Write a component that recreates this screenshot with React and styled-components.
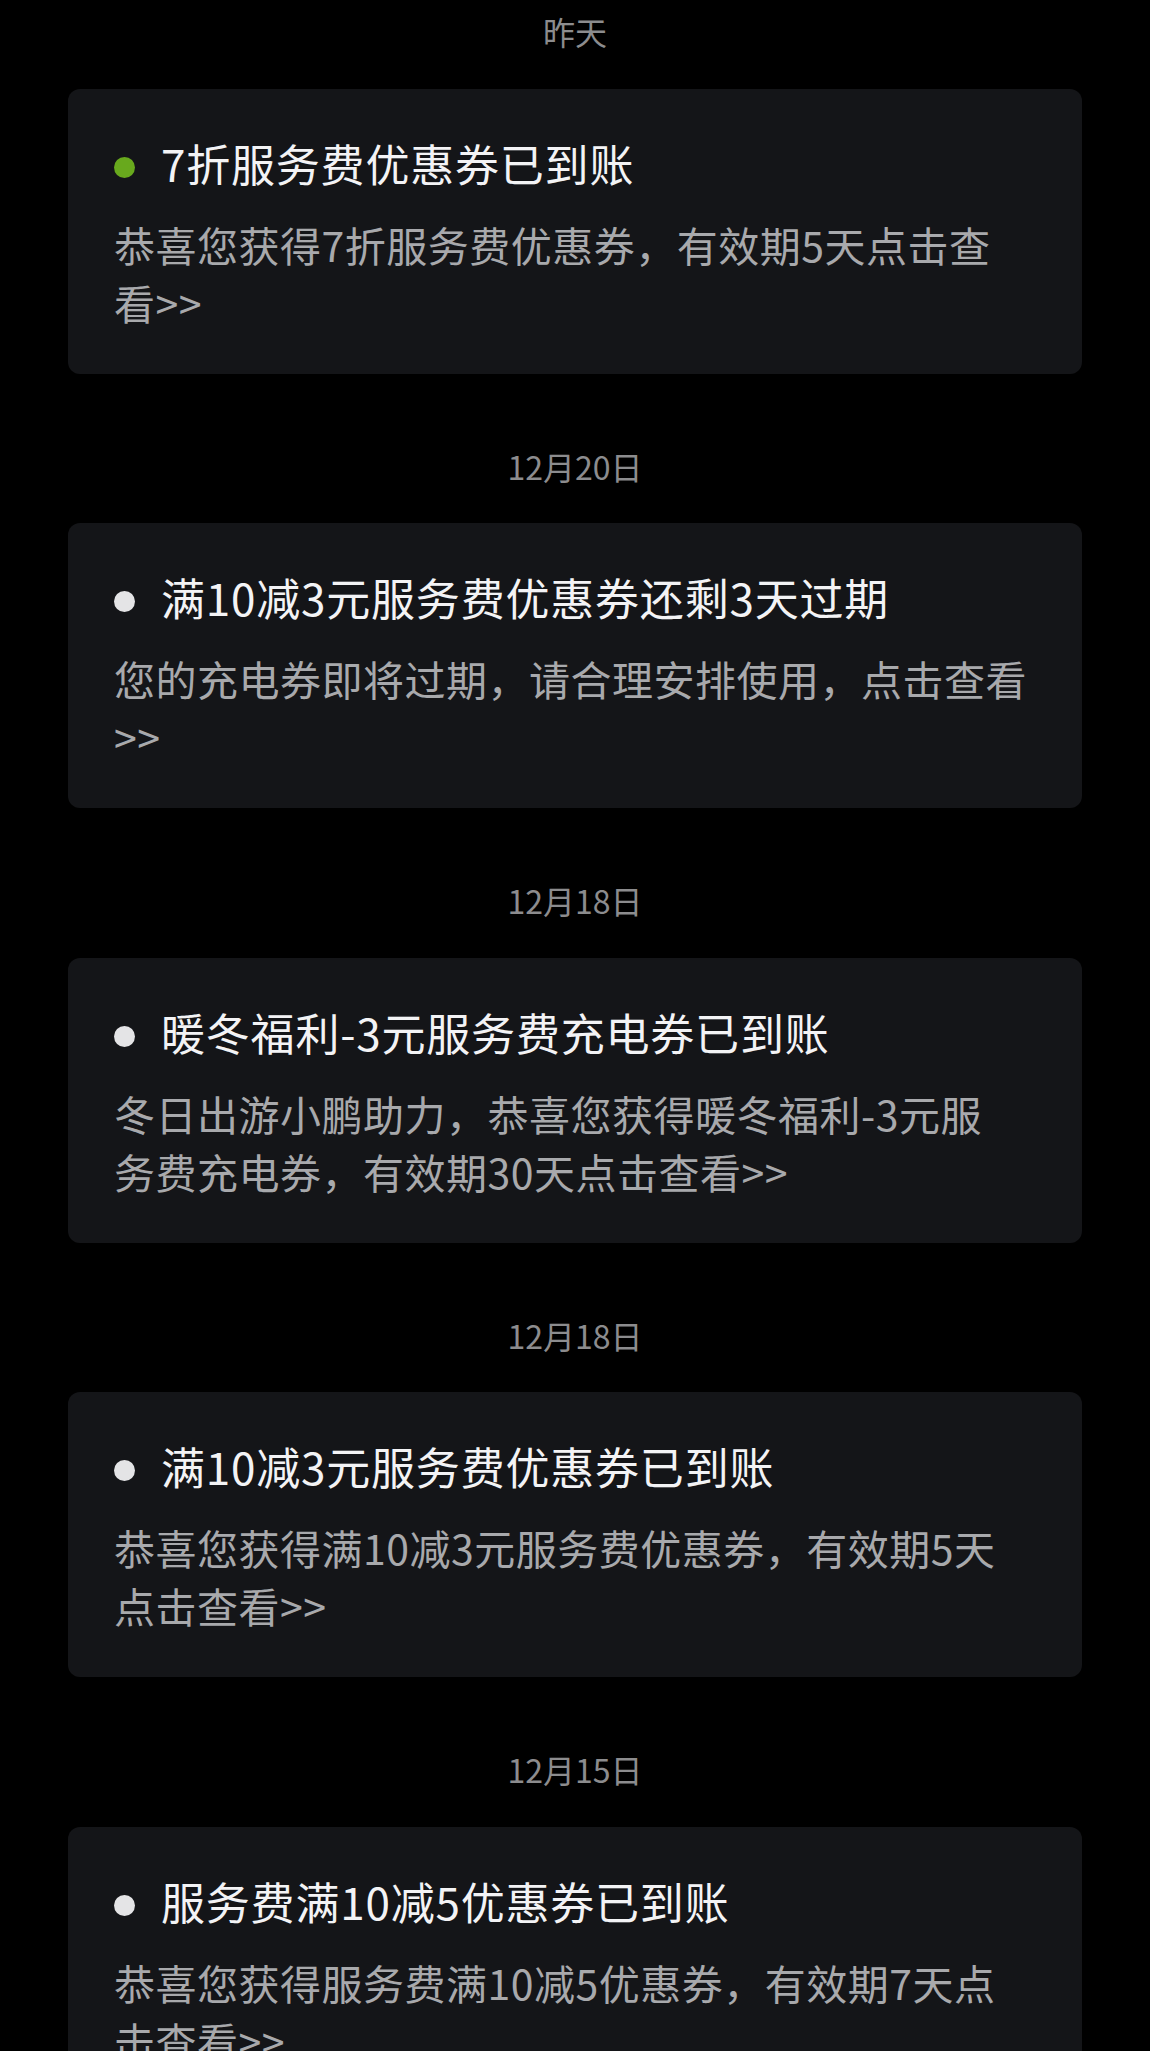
import React from "react"
import styled, { createGlobalStyle } from "styled-components"

const GlobalStyle = createGlobalStyle`
  html, body {
    margin: 0;
    padding: 0;
    background: #000;
  }
  body {
    font-family: "Noto Sans CJK SC", "Noto Sans", sans-serif;
    -webkit-font-smoothing: antialiased;
  }
`

const Page = styled.div`
  width: 1150px;
  padding: 11px 68px 0;
  box-sizing: border-box;
  display: flex;
  flex-direction: column;
`

const Section = styled.section`
  display: flex;
  flex-direction: column;
  & + & {
    margin-top: 72px;
  }
`

const DateLabel = styled.div`
  height: 40px;
  line-height: 40px;
  margin-bottom: 37.5px;
  text-align: center;
  font-size: 32px;
  color: #8c8c8e;
`

const Card = styled.div`
  background: #141518;
  border-radius: 12px;
  padding: 48px 46px 43px;
  display: flex;
  flex-direction: column;
  gap: 26px;
`

const TitleRow = styled.div`
  display: flex;
  align-items: flex-start;
  gap: 26px;
`

const Dot = styled.span`
  flex: none;
  width: 21px;
  height: 21px;
  margin-top: 20px;
  border-radius: 50%;
  background: ${(p) => (p.$unread ? "#68a91d" : "#e4e4e6")};
`

const Title = styled.h3`
  margin: 0;
  font-size: 44px;
  line-height: 52px;
  font-weight: 400;
  letter-spacing: 0.8px;
  color: #f3f3f5;
`

const Body = styled.p`
  margin: 0;
  font-size: 41px;
  line-height: 58px;
  letter-spacing: 0.5px;
  color: #a8a9ac;
`

const Line = styled.span`
  display: block;
  white-space: nowrap;
`

const messages = [
  {
    date: "昨天",
    unread: true,
    title: "7折服务费优惠券已到账",
    lines: ["恭喜您获得7折服务费优惠券，有效期5天点击查", "看>>"],
  },
  {
    date: "12月20日",
    title: "满10减3元服务费优惠券还剩3天过期",
    lines: ["您的充电券即将过期，请合理安排使用，点击查看", ">>"],
  },
  {
    date: "12月18日",
    title: "暖冬福利-3元服务费充电券已到账",
    lines: ["冬日出游小鹏助力，恭喜您获得暖冬福利-3元服", "务费充电券，有效期30天点击查看>>"],
  },
  {
    date: "12月18日",
    title: "满10减3元服务费优惠券已到账",
    lines: ["恭喜您获得满10减3元服务费优惠券，有效期5天", "点击查看>>"],
  },
  {
    date: "12月15日",
    title: "服务费满10减5优惠券已到账",
    lines: ["恭喜您获得服务费满10减5优惠券，有效期7天点", "击查看>>"],
  },
]

export default function App() {
  return (
    <>
      <GlobalStyle />
      <Page>
        {messages.map((m, i) => (
          <Section key={i}>
            <DateLabel>{m.date}</DateLabel>
            <Card>
              <TitleRow>
                <Dot $unread={m.unread} />
                <Title>{m.title}</Title>
              </TitleRow>
              <Body>
                {m.lines.map((l, j) => (
                  <Line key={j}>{l}</Line>
                ))}
              </Body>
            </Card>
          </Section>
        ))}
      </Page>
    </>
  )
}
